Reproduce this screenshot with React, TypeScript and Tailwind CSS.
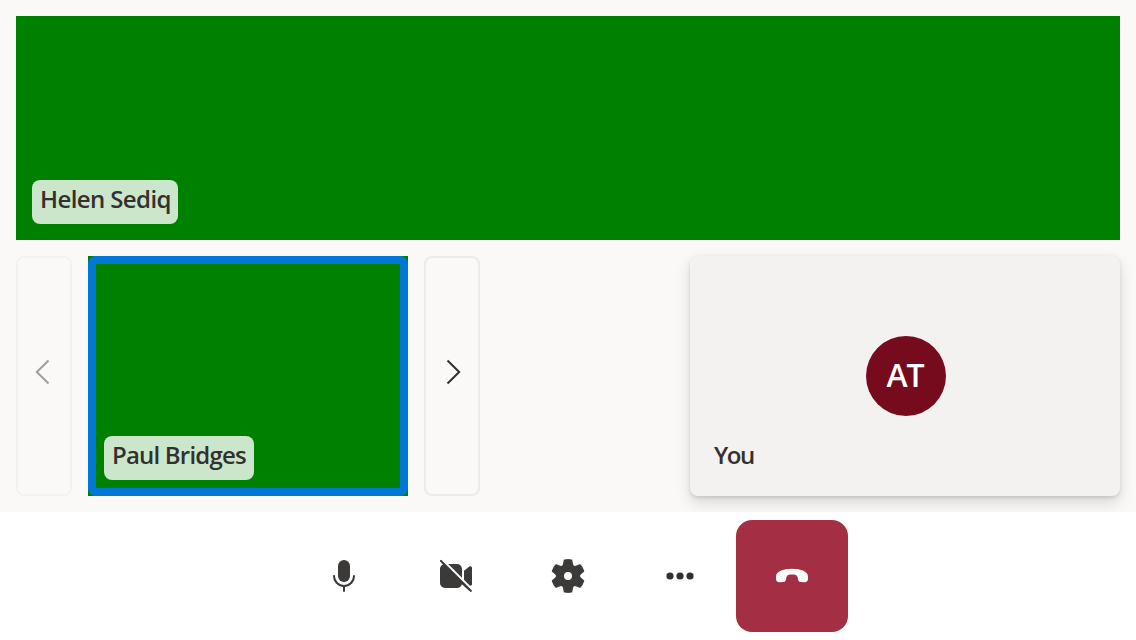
import type { ReactNode } from 'react';

function Icon({ children }: { children: ReactNode }) {
  return (
    <svg viewBox="0 0 20 20" className="size-10" fill="currentColor" aria-hidden="true">
      {children}
    </svg>
  );
}

function NameTag({ name, className }: { name: string; className: string }) {
  return (
    <div
      className={`flex h-11 items-center rounded-lg bg-white/80 pb-1.5 pl-2 text-2xl font-semibold whitespace-nowrap ${className}`}
    >
      {name}
    </div>
  );
}

function PagerButton({ label, path, disabled }: { label: string; path: string; disabled?: boolean }) {
  return (
    <button
      aria-label={label}
      disabled={disabled}
      className={`flex w-14 shrink-0 items-center justify-center rounded-lg border-2 pb-2 ${
        disabled ? 'border-[#f3f2f1] text-[#a19f9d]' : 'border-[#edebe9] text-[#323130]'
      }`}
    >
      <svg viewBox="0 0 32 32" className="size-8" fill="none" stroke="currentColor" strokeWidth="2" aria-hidden="true">
        <path d={path} />
      </svg>
    </button>
  );
}

function ControlButton({ label, danger, children }: { label: string; danger?: boolean; children: ReactNode }) {
  return (
    <button
      aria-label={label}
      className={`flex size-28 items-center justify-center rounded-2xl ${danger ? 'bg-[#a42e43] text-white' : 'bg-white text-[#3b3a39]'}`}
    >
      <Icon>{children}</Icon>
    </button>
  );
}

export default function App() {
  return (
    <div className="flex h-[640px] w-[1136px] flex-col overflow-hidden bg-[#faf9f8] font-['Open_Sans','Noto_Sans',sans-serif] text-[#323130]">
      <main className="flex h-[512px] flex-col gap-4 p-4">
        <section className="flex h-56 shrink-0 items-end bg-[#008000] p-4">
          <NameTag name="Helen Sediq" className="w-[146px] tracking-[-0.6px]" />
        </section>
        <section className="flex h-60 gap-4">
          <PagerButton label="Previous" path="M20.5 4.5 8.8 16l11.7 11.5" disabled />
          <div className="w-80 bg-[#008000]">
            <div className="flex h-full items-end rounded-lg border-8 border-[#0078d4] p-2">
              <NameTag name="Paul Bridges" className="w-[150px] tracking-[-0.8px]" />
            </div>
          </div>
          <PagerButton label="Next" path="M11.5 4.5 23.2 16 11.5 27.5" />
          <div className="relative ml-auto flex w-[430px] items-center justify-center rounded-lg bg-[#f3f2f1] shadow-[0_6.4px_14.4px_rgba(0,0,0,0.132),0_1.2px_3.6px_rgba(0,0,0,0.108)]">
            <div className="ml-0.5 flex size-20 items-center justify-center rounded-full bg-[#750b1c] pr-0.5 pb-0.5 text-[32px] font-semibold tracking-[-1.2px] text-white">
              AT
            </div>
            <div className="absolute bottom-4 left-4 flex h-11 items-center pb-1.5 pl-2 text-2xl font-semibold tracking-[-1.4px]">
              You
            </div>
          </div>
        </section>
      </main>
      <footer className="relative flex h-32 items-center justify-center bg-white">
        <ControlButton label="Mute">
          <path d="M10 13a3 3 0 0 0 3-3V5a3 3 0 0 0-6 0v5a3 3 0 0 0 3 3Z" />
          <path d="M5 9.5c.28 0 .5.22.5.5a4.5 4.5 0 1 0 9 0 .5.5 0 0 1 1 0 5.5 5.5 0 0 1-5 5.48v2.02a.5.5 0 0 1-1 0v-2.02A5.5 5.5 0 0 1 4.5 10c0-.28.22-.5.5-.5Z" />
        </ControlButton>
        <ControlButton label="Turn camera on">
          <path d="M2.85 2.15a.5.5 0 1 0-.7.7l1.42 1.34A2.5 2.5 0 0 0 2 6.5v7A2.5 2.5 0 0 0 4.5 16h6a2.5 2.5 0 0 0 2.42-1.87l4.23 3.72a.5.5 0 0 0 .7-.7l-15-15Z" />
          <path d="M13 6.5v4.38L6.12 4h4.38A2.5 2.5 0 0 1 13 6.5Z" />
          <path d="m14 11.88 2.96 2.96c.48.14 1.04-.2 1.04-.8V5.96c0-.7-.75-1.1-1.3-.67L14 7.4v4.48Z" />
        </ControlButton>
        <ControlButton label="Settings">
          <path d="M1.91 7.38A8.5 8.5 0 0 1 3.7 4.3a.5.5 0 0 1 .54-.13l1.92.68a1 1 0 0 0 1.32-.76l.36-2a.5.5 0 0 1 .4-.4 8.53 8.53 0 0 1 3.55 0c.2.04.35.2.38.4l.37 2a1 1 0 0 0 1.32.76l1.92-.68a.5.5 0 0 1 .54.13 8.5 8.5 0 0 1 1.78 3.08c.06.2 0 .4-.15.54l-1.56 1.32a1 1 0 0 0 0 1.52l1.56 1.32a.5.5 0 0 1 .15.54 8.5 8.5 0 0 1-1.78 3.08.5.5 0 0 1-.54.13l-1.92-.68a1 1 0 0 0-1.32.76l-.37 2a.5.5 0 0 1-.38.4 8.53 8.53 0 0 1-3.56 0 .5.5 0 0 1-.39-.4l-.36-2a1 1 0 0 0-1.32-.76l-1.92.68a.5.5 0 0 1-.54-.13 8.5 8.5 0 0 1-1.78-3.08.5.5 0 0 1 .15-.54l1.56-1.32a1 1 0 0 0 0-1.52L2.06 7.92a.5.5 0 0 1-.15-.54ZM8 10a2 2 0 1 0 4 0 2 2 0 0 0-4 0Z" />
        </ControlButton>
        <ControlButton label="More">
          <g className="text-[#323130]">
            <circle cx="5" cy="10" r="1.8" fill="currentColor" />
            <circle cx="10" cy="10" r="1.8" fill="currentColor" />
            <circle cx="15" cy="10" r="1.8" fill="currentColor" />
          </g>
        </ControlButton>
        <ControlButton label="Leave" danger>
          <path d="M2 10.2C2 7.9 5.4 6.4 10 6.4s8 1.5 8 3.8v1.2c0 1.2-.7 1.8-1.7 1.75l-1.9-.1c-.8-.1-1.1-.5-1.3-1.1l-.4-1.6c-.2-.8-1.1-1.1-2.7-1.1s-2.5.3-2.7 1.1l-.4 1.6c-.2.6-.5 1-1.3 1.1l-1.9.1C2.7 13.2 2 12.6 2 11.4Z" />
        </ControlButton>
      </footer>
    </div>
  );
}
